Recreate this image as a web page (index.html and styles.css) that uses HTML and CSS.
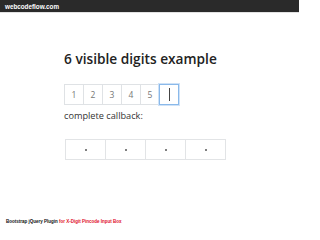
FILE: index.html
```html
<!DOCTYPE html>
<html>
<head>
<meta charset="utf-8">
<link rel="stylesheet" href="styles.css">
</head>
<body>
<div class="topbar">webcodeflow.com</div>
<main class="main">
  <h1 class="title">6 visible digits example</h1>
  <div class="pins">
    <div class="pin">1</div>
    <div class="pin">2</div>
    <div class="pin">3</div>
    <div class="pin">4</div>
    <div class="pin">5</div>
    <div class="pin pin-focus"><span class="caret"></span></div>
  </div>
  <p class="label">complete callback:</p>
  <div class="masked">
    <div class="mbox"><span class="dot"></span></div>
    <div class="mbox"><span class="dot"></span></div>
    <div class="mbox"><span class="dot"></span></div>
    <div class="mbox"><span class="dot"></span></div>
  </div>
</main>
<footer class="foot"><span class="foot-dark">Bootstrap jQuery Plugin</span> <span class="foot-red">for X-Digit Pincode Input Box</span></footer>
</body>
</html>
```
FILE: styles.css
```css
html, body {
  margin: 0;
  padding: 0;
  background: #fff;
}
body {
  font-family: "Open Sans", "Noto Sans", sans-serif;
  color: #212529;
  width: 299px;
  height: 230px;
  overflow: hidden;
}
.topbar {
  height: 12px;
  line-height: 13px;
  background: #2a2a2a;
  color: #fff;
  font-family: "Liberation Sans", Arial, sans-serif;
  font-weight: bold;
  font-size: 6.3px;
  padding-left: 5px;
  border-bottom: 1px solid #e2e2e2;
}
.main {
  padding-left: 64px;
}
.title {
  margin: 37px 0 0 0;
  font-size: 13.7px;
  line-height: 18px;
  font-weight: 600;
  color: #222;
}
.pins {
  display: flex;
  margin-top: 16px;
}
.pin {
  width: 20px;
  height: 21px;
  box-sizing: border-box;
  border: 1px solid #dfe2e5;
  margin-right: -1px;
  font-size: 8.5px;
  color: #777;
  display: flex;
  align-items: center;
  justify-content: center;
}
.pin-focus {
  border-color: #8ab9ea;
  box-shadow: 0 0 0 1px #cfe2f7;
}
.caret {
  display: block;
  width: 1px;
  height: 13px;
  background: #444;
}
.label {
  margin: 4px 0 0 0;
  font-size: 9.2px;
  line-height: 13px;
  color: #333;
}
.masked {
  display: flex;
  margin: 17px 0 0 1px;
}
.mbox {
  width: 41px;
  height: 21px;
  box-sizing: border-box;
  border: 1px solid #e2e4e6;
  margin-right: -1px;
  display: flex;
  align-items: center;
  justify-content: center;
}
.dot {
  width: 2px;
  height: 2px;
  border-radius: 50%;
  background: #555;
}
.foot {
  margin-top: 59px;
  padding-left: 6px;
  font-family: "Liberation Sans", Arial, sans-serif;
  font-weight: bold;
  font-size: 4.5px;
  line-height: 6px;
}
.foot-dark { color: #111; }
.foot-red { color: #e0102a; }
```
